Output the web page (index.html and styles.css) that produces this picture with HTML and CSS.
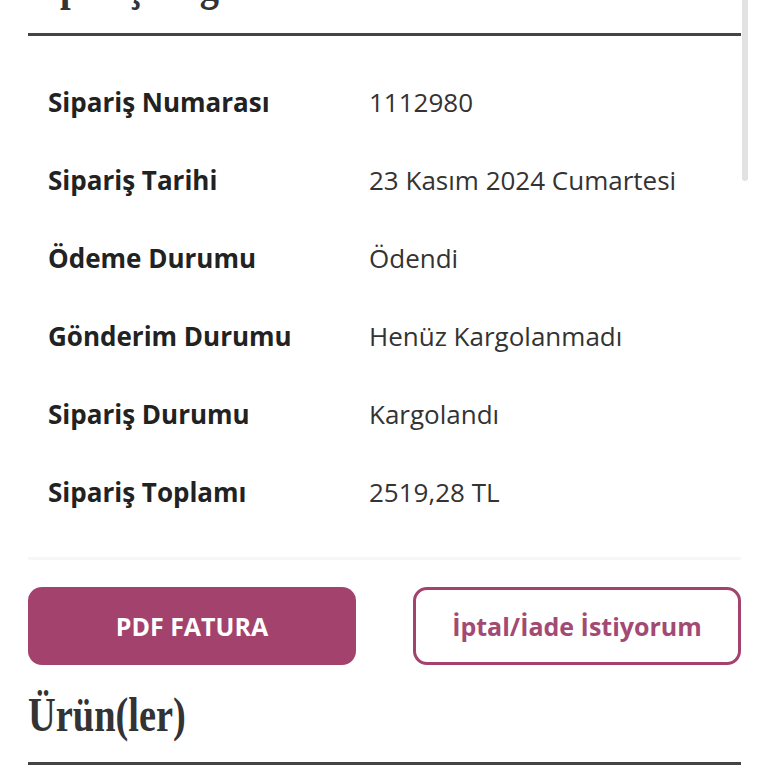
FILE: index.html
```html
<!DOCTYPE html>
<html lang="tr">
<head>
<meta charset="utf-8">
<link rel="stylesheet" href="styles.css">
</head>
<body>
<div class="page">
  <h2 class="section-title"><span class="title-text">Sipariş Bilgileri</span></h2>
  <div class="rule"></div>
  <div class="details">
    <div class="label">Sipariş Numarası</div><div class="value">1112980</div>
    <div class="label">Sipariş Tarihi</div><div class="value">23 Kasım 2024 Cumartesi</div>
    <div class="label">Ödeme Durumu</div><div class="value">Ödendi</div>
    <div class="label">Gönderim Durumu</div><div class="value">Henüz Kargolanmadı</div>
    <div class="label">Sipariş Durumu</div><div class="value">Kargolandı</div>
    <div class="label">Sipariş Toplamı</div><div class="value">2519,28 TL</div>
  </div>
  <div class="light-rule"></div>
  <div class="actions">
    <a class="btn btn-fill">PDF FATURA</a>
    <a class="btn btn-outline">İptal/İade İstiyorum</a>
  </div>
  <h2 class="section-title products"><span class="title-text">Ürün(ler)</span></h2>
  <div class="rule"></div>
</div>
<div class="scrollbar"></div>
</body>
</html>
```
FILE: styles.css
```css
html, body {
  margin: 0;
  padding: 0;
  background: #fff;
  overflow: hidden;
}
body {
  font-family: "Open Sans", "Noto Sans", sans-serif;
  color: #222;
}
.page {
  padding: 0 27px 0 28px;
}
.section-title {
  margin: 0;
  font-family: "Liberation Serif", "Times New Roman", serif;
  font-weight: bold;
  font-size: 48px;
  line-height: 52px;
  color: #333;
}
.section-title:first-child {
  margin-top: -42px;
  margin-bottom: 23px;
}
.title-text {
  display: inline-block;
  transform: scaleX(0.8);
  transform-origin: left center;
  white-space: nowrap;
}
.rule {
  height: 3px;
  background: #444;
}
.details {
  display: grid;
  grid-template-columns: 321px 1fr;
  grid-auto-rows: 78px;
  padding: 27px 0 0 20px;
  align-items: center;
}
.label {
  font-weight: 700;
  font-size: 26px;
  color: #222;
}
.value {
  font-size: 26px;
  color: #333;
}
.light-rule {
  margin-top: 26px;
  height: 3px;
  background: #f7f7f7;
}
.actions {
  display: grid;
  grid-template-columns: 1fr 1fr;
  column-gap: 57px;
  margin-top: 27px;
}
.btn {
  display: flex;
  align-items: center;
  justify-content: center;
  height: 78px;
  box-sizing: border-box;
  border-radius: 14px;
  font-weight: 700;
  font-size: 25px;
  text-decoration: none;
}
.btn-fill {
  background: #a4426e;
  color: #fff;
}
.btn-outline {
  border: 3px solid #a4426e;
  color: #a34a74;
  background: #fff;
}
.products {
  margin-top: 24px;
  margin-bottom: 21px;
}
.scrollbar {
  position: fixed;
  top: 0;
  left: 742px;
  width: 6px;
  height: 181px;
  background: #e2e2e2;
  border-radius: 0 0 3px 3px;
}
```
